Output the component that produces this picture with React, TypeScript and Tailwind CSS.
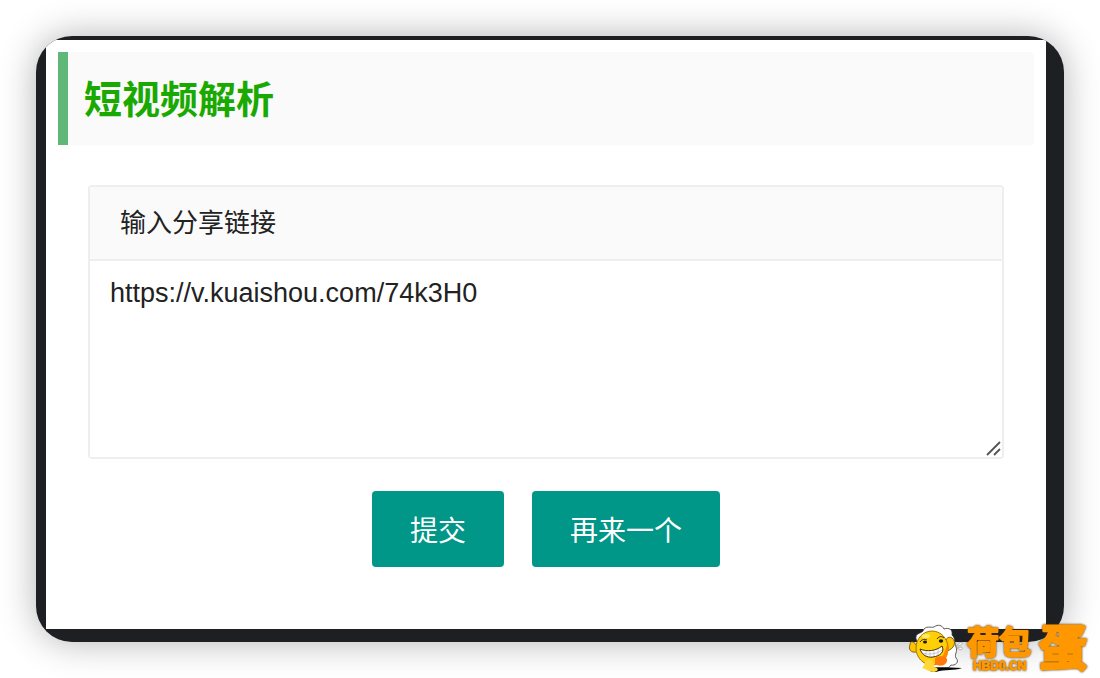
import { useState } from "react";

const Mascot = () => (
  <svg viewBox="0 0 56 50" className="h-[50px] w-14 shrink-0" aria-hidden="true">
    {/* egg white */}
    <path
      d="M8 15C7 9 12 10 15 7C17 1 23 4 26 3C30 0 34 1 36 5C41 3 45 6 44 11C48 15 46 19 48 23C50 28 46 30 48 34C52 38 47 42 43 41C40 46 34 44 30 45L20 42Z"
      fill="#fff"
      stroke="#333"
      strokeWidth="0.8"
    />
    <path d="M20 45C29 42 40 44 54 44C46 47 37 45 28 48C23 48 21 47 20 45Z" fill="#080808" />
    {/* yolk */}
    <path d="M9 22C5 16 2 17 2 21C0 25 3 29 8 28" fill="#ffc400" stroke="#654000" strokeWidth="0.8" />
    <path d="M37 20C37 14 41 12 44 14C49 18 46 25 39 27" fill="#ffc400" stroke="#654000" strokeWidth="0.8" />
    <ellipse cx="24" cy="24" rx="16" ry="17" fill="#ffcf08" stroke="#8a5a00" strokeWidth="0.8" />
    <path d="M39 21C43 31 36 41 25 41C34 36 36 30 39 21Z" fill="#ff8a00" />
    <path d="M27 34C32 31 40 32 39 37C38 42 31 43 27 40Z" fill="#ff7a08" />
    <path d="M17 37C22 34 27 37 26 43C31 44 31 47 26 48C22 48 18 45 14 44C16 42 17 40 17 37Z" fill="#ffd738" />
    <ellipse cx="18" cy="12" rx="4" ry="2" fill="#ffed65" />
    {/* face */}
    <path d="M12 18C14 15 17 15 19 16M29 15C31 12 34 12 36 14" fill="none" stroke="#332300" strokeWidth="1" />
    <ellipse cx="17" cy="18" rx="2" ry="1.5" fill="#171717" />
    <ellipse cx="33" cy="17" rx="2.2" ry="1.7" fill="#171717" />
    <path d="M12 25C19 28 28 27 34 22C37 28 32 32 25 33C19 34 14 31 12 25Z" fill="#fff" stroke="#472900" strokeWidth="1" />
    <path d="M14 29C21 31 29 30 34 26M18 27V32M22 28V33M26 27V32M30 25V31" fill="none" stroke="#999" strokeWidth="0.5" />
    {/* sweat */}
    <path d="M48 22L53 18C56 19 53 22 48 22ZM49 24C53 22 56 24 53 26Z" fill="#fff" stroke="#777" strokeWidth="0.5" />
  </svg>
);

const Watermark = () => (
  <div className="pointer-events-none absolute right-2 bottom-1 flex h-[50px] items-start">
    <Mascot />
    <svg
      viewBox="0 0 128 50"
      className="h-[50px] w-32 overflow-visible font-bold drop-shadow-[0_0_1px_#4a2b00]"
      fill="#ff9800"
      stroke="#ff9800"
      strokeLinejoin="round"
      strokeLinecap="round"
    >
      <text x="3" y="30" fontSize="32" strokeWidth="2">
        荷包
      </text>
      <text x="75" y="41" fontSize="48" strokeWidth="3">
        蛋
      </text>
      <text x="9" y="46" fontSize="12" strokeWidth="1">
        HBD0.CN
      </text>
    </svg>
  </div>
);

const App = () => {
  const [link, setLink] = useState("https://v.kuaishou.com/74k3H0");

  return (
    <div className="relative min-h-screen bg-white p-9 font-['Liberation_Sans','Noto_Sans_CJK_SC',sans-serif] text-[#222]">
      <div className="overflow-hidden rounded-[36px] bg-[#1e1f23] pt-1 pr-[18px] pb-[13px] pl-[10px] shadow-[0_0_36px_rgba(0,0,0,0.3)]">
        <main className="bg-white px-3 pt-3 pb-[62px]">
          <header className="rounded-r border-l-10 border-[#5fb878] bg-[#fafafa] px-4 pt-[22px] pb-[18px]">
            <h1 className="text-[38px] leading-[53px] font-bold text-[#1aa900]">短视频解析</h1>
          </header>

          <form className="px-[30px] pt-10" onSubmit={(e) => e.preventDefault()}>
            <div className="relative rounded border-2 border-[#eee]">
              <label
                htmlFor="link"
                className="block border-b-2 border-[#eee] bg-[#fafafa] px-[30px] text-[26px] leading-[72px]"
              >
                输入分享链接
              </label>
              <textarea
                id="link"
                value={link}
                onChange={(e) => setLink(e.target.value)}
                className="block h-[196px] w-full resize-none bg-white px-5 py-3 text-[27px] leading-10 outline-none"
              />
              <svg viewBox="0 0 16 16" className="absolute right-0 bottom-0 h-4 w-4" aria-hidden="true">
                <path d="M1 14L14 1M8 14L14 8" stroke="#555" strokeWidth="1.8" fill="none" />
              </svg>
            </div>

            {/* Buttons */}
            <div className="mt-8 flex justify-center gap-7">
              <button type="submit" className="h-[76px] rounded bg-[#009688] px-[38px] pt-[6px] text-[28px] text-white">
                提交
              </button>
              <button
                type="button"
                onClick={() => setLink("")}
                className="h-[76px] rounded bg-[#009688] px-[38px] pt-[6px] text-[28px] text-white"
              >
                再来一个
              </button>
            </div>
          </form>
        </main>
      </div>
      <Watermark />
    </div>
  );
};

export default App;
